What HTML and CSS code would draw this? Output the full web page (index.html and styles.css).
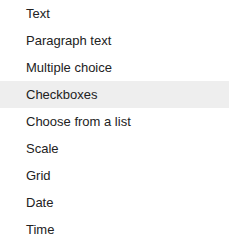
FILE: index.html
```html
<!DOCTYPE html>
<html lang="en">
<head>
  <meta charset="UTF-8" />
  <title>Question types</title>
  <link rel="stylesheet" href="styles.css">
</head>
<body>
  <ul class="menu">
    <li>Text</li>
    <li>Paragraph text</li>
    <li>Multiple choice</li>
    <li class="active">Checkboxes</li>
    <li>Choose from a list</li>
    <li>Scale</li>
    <li>Grid</li>
    <li>Date</li>
    <li>Time</li>
  </ul>
</body>
</html>
```

FILE: styles.css
```css
body {
  margin: 0;
  background: #fff;
  font-family: 'Liberation Sans', Arial, sans-serif;
  color: #222;
}

.menu {
  list-style: none;
  margin: 0;
  padding: 0;
}

.menu li {
  height: 27px;
  line-height: 27px;
  padding-left: 26px;
  font-size: 13px;
}

.menu li.active {
  background: #eeeeee;
}
```
